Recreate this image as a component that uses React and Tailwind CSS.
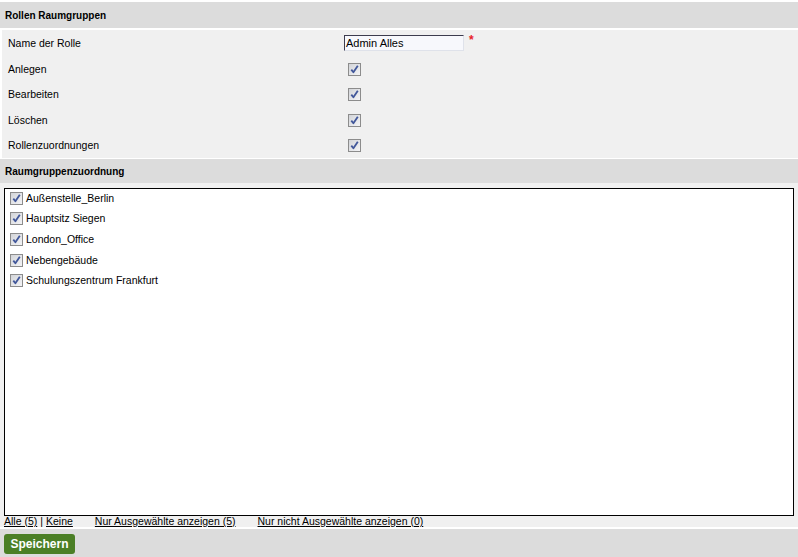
import React from 'react'

const font = { fontFamily: '"Liberation Sans", Arial, sans-serif' }

function Check() {
  return (
    <span className="inline-flex h-[13px] w-[13px] shrink-0 items-center justify-center border border-[#8c8c8c] bg-gradient-to-br from-[#d2d4d8] to-[#f4f4f6]">
      <svg width="11" height="11" viewBox="0 0 11 11">
        <path d="M2.3 5.6 L4.4 8.3 L8.8 1.8" fill="none" stroke="#41579a" strokeWidth="1.8" strokeLinejoin="round" />
      </svg>
    </span>
  )
}

const rights = [
  { label: 'Anlegen', h: 'h-[26px]' },
  { label: 'Bearbeiten', h: 'h-[25px]' },
  { label: 'Löschen', h: 'h-[26px]' },
  { label: 'Rollenzuordnungen', h: 'h-[25px]' },
]

const gruppen = ['Außenstelle_Berlin', 'Hauptsitz Siegen', 'London_Office', 'Nebengebäude', 'Schulungszentrum Frankfurt']

export default function App() {
  return (
    <div className="h-[557px] w-[798px] overflow-hidden bg-white pt-[2px] text-[10.5px] leading-[11px] text-black" style={font}>
      <div className="flex h-[26px] items-center bg-[#dcdcdc] pl-[5px] text-[10px] font-bold">Rollen Raumgruppen</div>

      <div className="ml-[2px] mt-[2px] h-[128px] bg-[#f0f0f0]">
        <div className="flex h-[26px] items-center">
          <span className="w-[342px] pl-[6px]">Name der Rolle</span>
          <div className="flex h-[16px] w-[120px] items-center border-t border-l border-t-[#3c3c4e] border-l-[#3c3c4e] border-b border-r border-b-[#dfe2ea] border-r-[#dfe2ea] bg-[#f7f8fc] pl-[1px] text-[11px]">
            Admin Alles
          </div>
          <span className="ml-[5px] -mt-[6px] text-[12px] font-bold text-[#e8202a]">*</span>
        </div>
        {rights.map((r) => (
          <div key={r.label} className={`flex items-center ${r.h}`}>
            <span className="w-[346px] pl-[6px]">{r.label}</span>
            <Check />
          </div>
        ))}
      </div>

      <div className="mt-px flex h-[24px] items-center bg-[#dcdcdc] pl-[5px] text-[10px] font-bold">Raumgruppenzuordnung</div>

      <div className="bg-[#f0f0f0] pl-[4px] pr-[4px] pt-[5px]">
        <div className="h-[328px] border border-black bg-white pl-[5px]">
          <div className="-mt-px">
            {gruppen.map((g) => (
              <div key={g} className="flex h-[20.6px] items-center gap-[3px]">
                <Check />
                <span>{g}</span>
              </div>
            ))}
          </div>
        </div>
        <div className="flex h-[11px] items-center">
          <a className="underline">Alle (5)</a>
          <span className="mx-[3px]">|</span>
          <a className="underline">Keine</a>
          <a className="ml-[22px] underline">Nur Ausgewählte anzeigen (5)</a>
          <a className="ml-[22px] underline">Nur nicht Ausgewählte anzeigen (0)</a>
        </div>
      </div>

      <div className="mt-[2px] h-[28px] bg-[#dcdcdc] pl-[4px] pt-[5px]">
        <button className="h-[20px] w-[71px] rounded-[3px] bg-[#4b7f26] text-[12px] font-bold text-white" style={font}>
          Speichern
        </button>
      </div>
    </div>
  )
}
